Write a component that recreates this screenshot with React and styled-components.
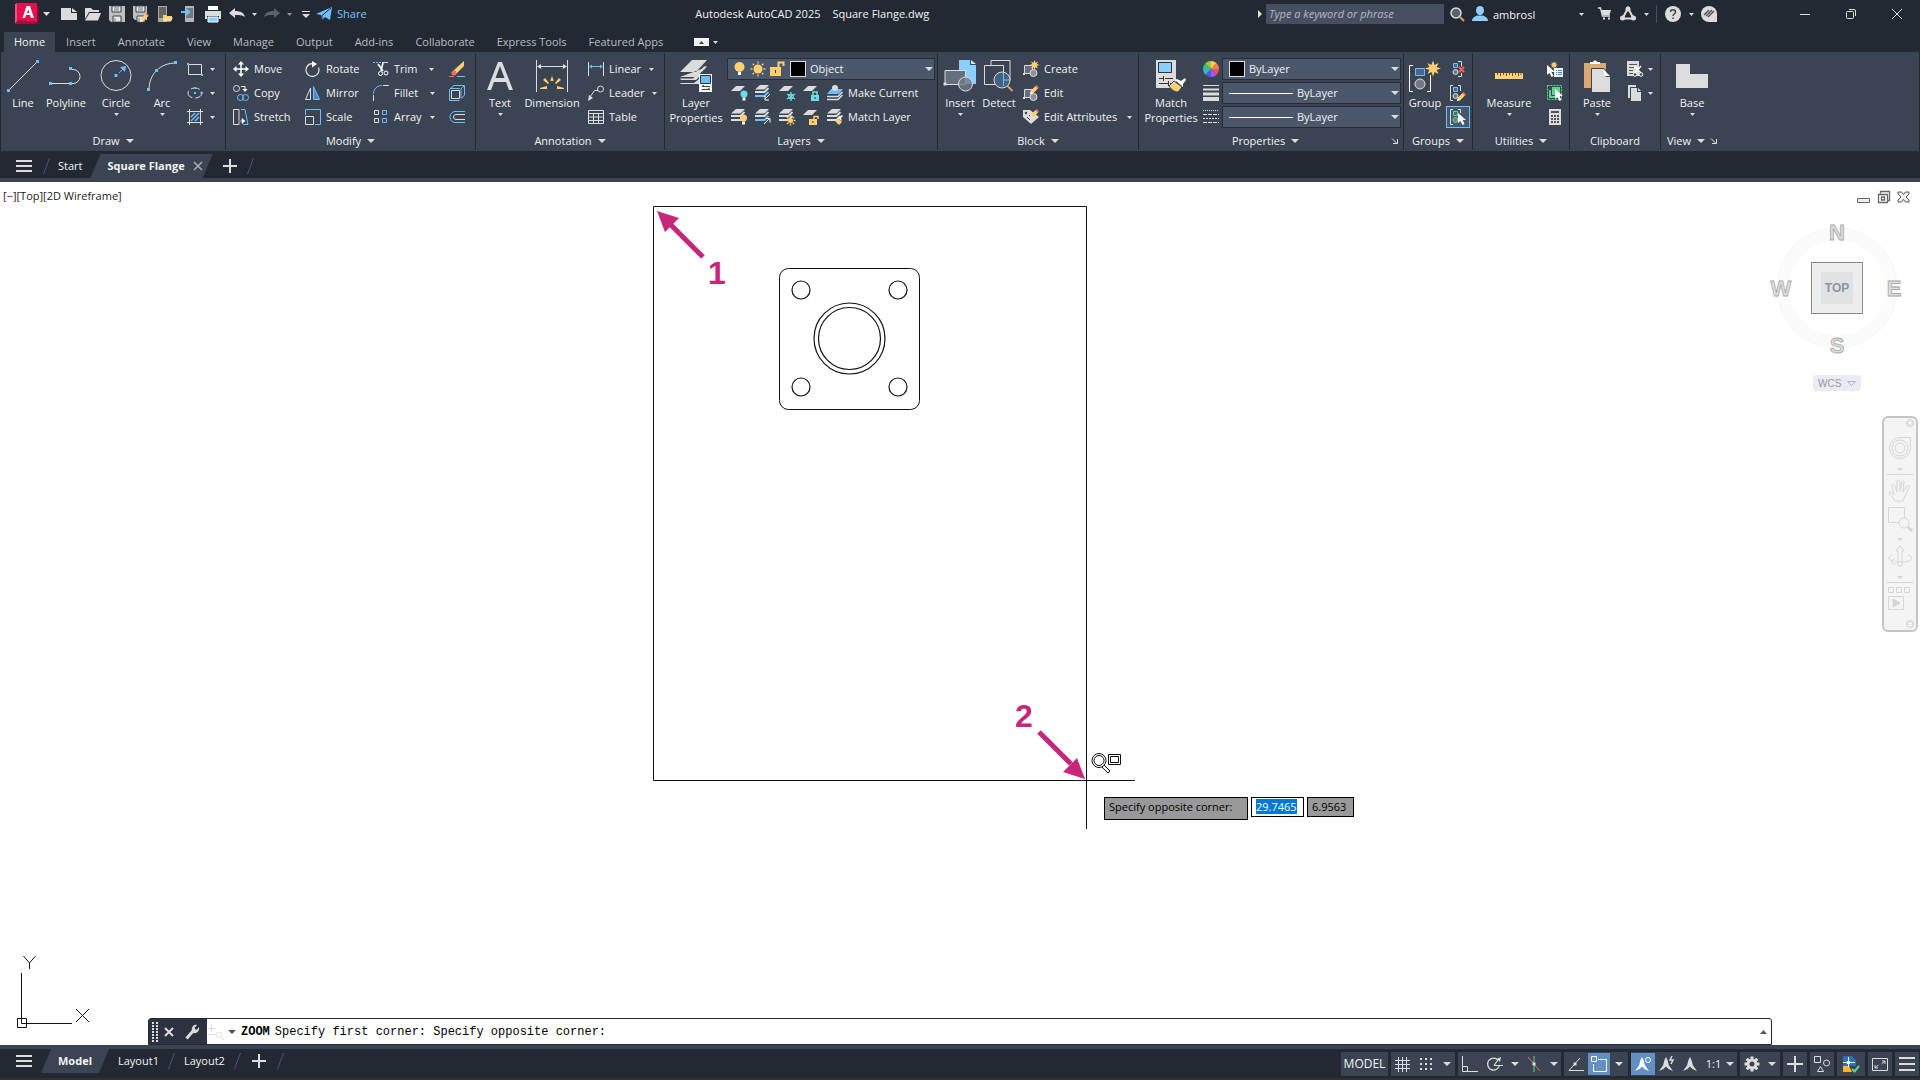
import React from "react";
import styled, { createGlobalStyle, css } from "styled-components";

const LIGHT = "#dcdcdc";
const BLUE = "#6cbeff";
const GOLD = "#ffcf70";
const DARK = "#222933";
const PANEL = "#3b4453";
const FIELD = "#4b586b";
const PINK = "#c8267b";

const GlobalStyle = createGlobalStyle`
  * {
    box-sizing: border-box;
  }

  html, body, #root {
    height: 100%;
    margin: 0;
  }

  body {
    font-family: "Open Sans", "Noto Sans", sans-serif;
    font-size: 11px;
    line-height: 15px;
    color: #f2f2f2;
    background: ${DARK};
    overflow: hidden;
  }

  button, input, select {
    font: inherit;
    color: inherit;
    margin: 0;
    padding: 0;
    border: 0;
    background: none;
    outline: none;
  }
`;

const Svg = styled.svg`
  display: block;
  flex: none;
  overflow: visible;
`;

const Ico = ({ w = 16, h = 16, children }) => (
  <Svg
    width={w}
    height={h}
    viewBox={`0 0 ${w} ${h}`}
    fill="none"
    stroke={LIGHT}
    aria-hidden="true"
  >
    {children}
  </Svg>
);

const Dot = ({ x, y, s = 3, c = BLUE }) => (
  <rect x={x - s / 2} y={y - s / 2} width={s} height={s} fill={c} stroke="none" />
);

const Caret = ({ w = 5, c = LIGHT }) => (
  <Ico w={w} h={Math.ceil(w / 2)}>
    <path d={`M0 0h${w}l${-w / 2} ${Math.ceil(w / 2)}z`} fill={c} stroke="none" />
  </Ico>
);

/* ---------- shell ---------- */

const App = styled.div`
  display: flex;
  flex-direction: column;
  height: 100vh;
  background: ${DARK};
  white-space: nowrap;
`;

const TitleBar = styled.header`
  display: flex;
  align-items: center;
  height: 28px;
  padding-left: 15px;
`;

const ToolButton = styled.button`
  display: flex;
  align-items: center;
  justify-content: center;
  flex: none;
  width: ${(p) => p.$w || 24}px;
  height: 24px;
`;

/* text sits slightly above the middle of its icon */
const Label = styled.span`
  padding-bottom: 2px;
`;

const ShareButton = styled.button`
  display: flex;
  align-items: center;
  gap: 5px;
  padding-left: 4px;
  color: #7cc5ff;
`;

const WindowTitle = styled.h1`
  display: flex;
  flex: 1;
  justify-content: center;
  gap: 12px;
  margin: 0;
  padding-bottom: 2px;
  font-size: 11px;
  font-weight: 400;
`;

const SearchField = styled.input`
  width: 178px;
  height: 20px;
  margin: 0 4px;
  padding: 0 3px 1px;
  background: #464f61;

  &::placeholder {
    color: #b4b9c2;
    font-style: italic;
    opacity: 1;
  }
`;

const UserButton = styled.button`
  display: flex;
  align-items: center;
  justify-content: space-between;
  width: 112px;
  margin: 0 10px 0 6px;
`;

const IconLabel = styled.span`
  display: flex;
  align-items: center;
  gap: 5px;
`;

const Rule = styled.span`
  width: 1px;
  height: 18px;
  margin: 0 4px;
  background: #465064;
`;

const WindowButtons = styled.div`
  display: flex;
  margin-left: 61px;
`;

/* ---------- ribbon ---------- */

const RibbonTabs = styled.nav`
  display: flex;
  align-items: flex-end;
  height: 24px;
  padding-left: 4px;
`;

const RibbonTab = styled.button`
  height: 20px;
  padding: 0 11px 1px;
  color: #b9bcc0;

  ${(p) =>
    p.$active &&
    css`
      padding: 0 10px 1px;
      color: #f2f2f2;
      background: ${PANEL};
    `}
`;

const MinimizeRibbon = styled.button`
  display: flex;
  align-items: center;
  gap: 4px;
  height: 20px;
  margin-left: 20px;
`;

const Ribbon = styled.div`
  display: flex;
  flex: none;
  height: 99px;
  margin: 0 1px;
  background: ${PANEL};
`;

const PanelBox = styled.section`
  display: flex;
  flex-direction: column;
  flex: none;
  width: ${(p) => p.$w}px;
  margin: 1px 0;
  padding-top: 4px;
  border-right: ${(p) => (p.$last ? 0 : 1)}px solid ${DARK};
`;

const PanelBody = styled.div`
  display: flex;
  flex: 1;
  padding-left: ${(p) => p.$pad || 0}px;
`;

const PanelFoot = styled.div`
  display: flex;
  align-items: center;
  height: 19px;
`;

const PanelTitle = styled.button`
  display: flex;
  flex: 1;
  align-items: center;
  justify-content: center;
  gap: 6px;
`;

const Launcher = styled.button`
  display: flex;
  width: 11px;
`;

const Panel = ({ w, pad, title, caret = true, launcher, last, children }) => (
  <PanelBox $w={w} $last={last} aria-label={title}>
    <PanelBody $pad={pad}>{children}</PanelBody>
    <PanelFoot>
      <PanelTitle>
        {title}
        {caret && <Caret w={8} />}
      </PanelTitle>
      {launcher && (
        <Launcher aria-label={`${title} settings`}>
          <Ico w={6} h={6}>
            <path d="M0 .5l5 5M5.500 1v4.500H1" />
          </Ico>
        </Launcher>
      )}
    </PanelFoot>
  </PanelBox>
);

const BigButton = styled.button`
  display: flex;
  flex-direction: column;
  align-items: center;
  flex: none;
  width: ${(p) => p.$w}px;
  height: 72px;
  padding-top: 3px;
  text-align: center;
  white-space: pre-line;
`;

const BigLabel = styled.span`
  padding: 3px 0;
`;

const Big = ({ w, icon, label, caret }) => (
  <BigButton $w={w}>
    {icon}
    <BigLabel>{label}</BigLabel>
    {caret && <Caret />}
  </BigButton>
);

const Column = styled.div`
  display: grid;
  grid-template-rows: repeat(3, 24px);
  align-items: center;
  flex: none;
  width: ${(p) => (p.$w ? `${p.$w}px` : "auto")};
  margin-left: ${(p) => p.$gap || 0}px;
`;

const SmallButton = styled.button`
  display: flex;
  align-items: center;
  gap: 5px;
`;

const DropButton = styled.button`
  display: flex;
  align-items: center;
  justify-content: space-between;
  width: ${(p) => p.$w}px;
`;

const Toggle = styled.button`
  display: flex;
  align-items: center;
  justify-content: center;
  width: 24px;
  height: 22px;
  border: 1px solid ${(p) => (p.$on ? BLUE : "transparent")};
  background: ${(p) => (p.$on ? "#46586f" : "none")};
`;

const IconRow = styled.div`
  display: flex;
  align-items: center;
  gap: 8px;
  padding-left: 4px;
`;

const Combo = styled.label`
  display: flex;
  align-items: center;
  gap: 4px;
  width: ${(p) => p.$w}px;
  height: 22px;
  padding: 0 1px 0 6px;
  border: 1px solid #262d38;
  background: ${FIELD};
`;

const Select = styled.select`
  flex: 1;
  min-width: 0;
  padding-bottom: 1px;
  appearance: none;
`;

const Swatch = styled.span`
  width: 16px;
  height: 16px;
  border: 1px solid ${LIGHT};
  background: #000;
`;

const LineSample = styled.span`
  width: 64px;
  height: 1px;
  background: #fff;
`;

/* ---------- file + layout tabs ---------- */

const FileTabs = styled.nav`
  display: flex;
  align-items: flex-end;
  flex: none;
  height: 31px;
  padding-left: 12px;
  border-bottom: 4px solid ${PANEL};
`;

const Tab = styled.button`
  display: flex;
  align-items: center;
  justify-content: center;
  gap: 9px;
  height: 24px;
  padding: 0 ${(p) => p.$end || p.$pad}px 1px ${(p) => p.$pad}px;
  font-weight: ${(p) => (p.$active ? 700 : 400)};

  ${(p) =>
    p.$active &&
    css`
      background: ${PANEL};
      clip-path: polygon(10px 0, 100% 0, calc(100% - 10px) 100%, 0 100%);
    `}
`;

const Slash = () => (
  <Ico w={7} h={24}>
    <path d="M.5 20L6.500 4" stroke="#4f5868" />
  </Ico>
);

const SlashBox = styled.span`
  display: flex;
  justify-content: center;
  width: 20px;
`;

const StatusBar = styled.footer`
  display: flex;
  justify-content: space-between;
  flex: none;
  height: 35px;
  border-top: 4px solid ${PANEL};
  border-bottom: 2px solid #303030;
`;

const LayoutTabs = styled.nav`
  display: flex;
  align-items: center;
  height: 24px;
  padding-left: 7px;
`;

const StatusTools = styled.div`
  display: flex;
  align-items: center;
  gap: 3px;
  padding-right: 1px;
`;

const StatusGroup = styled.div`
  display: flex;
  align-items: center;
  height: 24px;
  background: ${PANEL};
`;

const StatusButton = styled.button`
  display: flex;
  align-items: center;
  justify-content: center;
  gap: 5px;
  width: ${(p) => p.$w || 24}px;
  height: 22px;
  font-size: ${(p) => (p.$large ? 12 : 11)}px;
  background: ${(p) => (p.$on ? "#6390c4" : "none")};
`;

/* ---------- drawing area ---------- */

const Canvas = styled.main`
  position: relative;
  flex: 1;
  min-height: 0;
  overflow: hidden;
  background: #fff;
  color: #222;
`;

const Drawing = styled.svg`
  position: absolute;
  inset: 0;
  width: 100%;
  height: 100%;
`;

const ViewportLabel = styled.div`
  position: absolute;
  top: 6px;
  left: 3px;
`;

const ViewportTools = styled.aside`
  position: absolute;
  top: 8px;
  right: 2px;
  bottom: 0;
  display: flex;
  flex-direction: column;
  align-items: flex-end;
`;

const ViewportButtons = styled.div`
  display: flex;
  gap: 7px;
  padding-right: 8px;
`;

const PlainButton = styled.button`
  display: block;
`;

const CubeBox = styled.div`
  width: 144px;
  margin: 1px 9px 0 0;
`;

const WcsButton = styled.button`
  display: flex;
  align-items: center;
  justify-content: space-between;
  width: 48px;
  height: 16px;
  margin: 22px 57px 0 0;
  padding: 0 5px;
  border-radius: 4px;
  font: 10px "Liberation Sans", sans-serif;
  color: #999;
  background: #ebebf5;
`;

const NavBar = styled.div`
  display: flex;
  flex-direction: column;
  align-items: center;
  width: 36px;
  height: 216px;
  margin-top: 25px;
  border: 2px solid #c5c5c5;
  border-radius: 6px;
  background: #f4f4f4;
`;

const Prompt = styled.div`
  position: absolute;
  left: 1104px;
  top: 615px;
  display: flex;
  align-items: flex-start;
  gap: 3px;
  color: #000;
`;

const PromptLabel = styled.label`
  height: 23px;
  width: 144px;
  padding: 1px 4px;
  border: 1px solid #000;
  background: #999;
`;

const PromptInput = styled.input`
  width: ${(p) => p.$w}px;
  height: 20px;
  padding: 0 4px 2px;
  border: 1px solid #000;
  background: ${(p) => (p.$muted ? "#999" : "#fff")};

  &::selection {
    color: #fff;
    background: #0078d7;
  }
`;

const CommandLine = styled.div`
  position: absolute;
  left: 148px;
  right: 148px;
  bottom: 0;
  display: flex;
  height: 27px;
  border: 1px solid ${DARK};
  border-radius: 3px 3px 0 0;
  background: #fff;
`;

const CommandGrip = styled.div`
  display: flex;
  align-items: center;
  gap: 6px;
  width: 58px;
  padding-left: 3px;
  background: #2b3240;
`;

const CommandInput = styled.div`
  display: flex;
  align-items: center;
  flex: 1;
  gap: 5px;
  padding: 1px 4px 0 1px;
  font: 12px "Liberation Mono", monospace;
  color: #000;
`;

const CommandName = styled.label`
  font-weight: 700;
`;

const CommandText = styled.input`
  flex: 1;
  min-width: 0;
`;

/* ---------- icons ---------- */

const fillL = { fill: LIGHT, stroke: "none" };
const fillB = { fill: BLUE, stroke: "none" };
const fillY = { fill: GOLD, stroke: "none" };

const Logo = () => (
  <Ico w={24} h={22}>
    <path d="M2 1l2 20h20V3z" fill="#7a0f2e" stroke="none" />
    <path d="M0 1l3-1v17l-3 4z" fill="#f0567c" stroke="none" />
    <rect x="2" width="20" height="19" fill="#e51050" stroke="none" />
    <path d="M0 21l3-4 19 2-2 2z" fill="#a30d38" stroke="none" />
    <path d="M11.500 3h3.500l4 12h-3l-1-3h-4l-1 3H7.500zM13.300 6.500L12 10h2.500z" fill="#fff" stroke="none" fillRule="evenodd" />
  </Ico>
);

const Floppy = ({ s = 16 }) => (
  <>
    <path d={`M0 0h${s}v${s}H2l-2-2z`} {...fillL} fill="#bfbfbf" />
    <path d="M3 0h9v6H3zM4 10h8v6H4z" fill="#e8e8e8" stroke={PANEL} />
    <path d="M5 2h5M5 4h5M6 12v3" stroke="#777" />
  </>
);

const Pencil = ({ x = 7, y = 7 }) => (
  <g transform={`translate(${x} ${y})`} stroke="none">
    <path d="M0 9l1-3.500L5.500 1 8 3.500 3.500 8z" fill={GOLD} />
    <path d="M5.500 1L6.500 0 9 2.500 8 3.500z" fill="#ff6b6b" />
    <path d="M0 9l.8-3L3 8.200z" fill="#fff" />
  </g>
);

const Pointer = ({ x = 7, y = 4 }) => (
  <path
    transform={`translate(${x} ${y})`}
    d="M0 0v10l2.500-2L4.500 12l2-1-2-4H8z"
    fill="#fff"
    stroke="none"
  />
);

const Sheets = ({ accent = LIGHT }) => (
  <>
    <path d="M5 0h9L9.500 4.500H0z" {...fillL} />
    <path d="M0 7h9.500L13.500 3" strokeWidth="1.800" />
    <path d="M0 11h9.500L13.500 7" stroke={accent} strokeWidth="1.800" />
  </>
);

const Sheet = () => <path d="M5 1h9l-5 5H0z" {...fillL} />;

const Bulb = ({ x, y, r = 3.5, c = GOLD }) => (
  <g stroke="none">
    <circle cx={x} cy={y} r={r} fill={c} />
    <rect x={x - 1.5} y={y + r} width="3" height="3" fill="#fff" />
  </g>
);

const Sun = ({ x, y, r = 3, ray = 5 }) => (
  <g stroke={GOLD} strokeWidth="1.300">
    <circle cx={x} cy={y} r={r} fill={GOLD} stroke="none" />
    {[0, 45, 90, 135, 180, 225, 270, 315].map((a) => (
      <path key={a} d={`M${x + ray - 1} ${y}h2`} transform={`rotate(${a} ${x} ${y})`} />
    ))}
  </g>
);

const Lock = ({ x, y, open, c = GOLD }) => (
  <g transform={`translate(${x} ${y})`}>
    <rect y="4" width="8" height="6" fill={c} stroke="none" />
    <path d={open ? "M5 4V1.500h4V4" : "M2 4V1h4v3"} stroke={c} strokeWidth="1.500" />
    <path d="M4 6v2" stroke="#333" />
  </g>
);

const Burst = ({ x, y, r }) => (
  <path
    transform={`translate(${x} ${y}) scale(${r})`}
    d="M0-1l.2.55.5-.25-.25.5L1 0 .45.200l.250.5-.5-.25L0 1-.2.450l-.5.25.25-.5L-1 0l.55-.2-.25-.5.5.25z"
    {...fillY}
  />
);

const NewIcon = () => (
  <Ico><path d="M0 2h10v5h6v7H0z" {...fillL} /><path d="M11 2l5 4h-5z" {...fillL} /></Ico>
);
const OpenIcon = () => (
  <Ico>
    <path d="M0 14V2h6l2 2h6v2H4L0 13z" {...fillL} />
    <path d="M4.500 7H16l-3 7.500H0z" {...fillL} />
  </Ico>
);
const SaveIcon = () => <Ico><Floppy /></Ico>;
const SaveAsIcon = () => <Ico><Floppy s={14} /><Pencil /></Ico>;
const WebOpenIcon = () => (
  <Ico>
    <path d="M1 0h9v16H1z" {...fillL} fill="#a8a8a8" /><path d="M2 1h7v11H2z" fill="#666" stroke="none" />
    <path d="M6 15V9h3l1 1h5v1l-2 4z" {...fillY} /><path d="M8 11.500h8l-2 4H6z" fill="#ffe0a0" stroke="none" />
  </Ico>
);
const WebSaveIcon = () => (
  <Ico>
    <path d="M4 0h9v16H4z" {...fillL} fill="#b5b5b5" /><path d="M5 2h7v10H5z" fill="#777" stroke="none" />
    <path d="M0 5h5V2l5 4-5 4V7H0z" {...fillB} />
  </Ico>
);
const PrintIcon = () => (
  <Ico>
    <path d="M3 0h10v4H3z" fill="#fff" stroke="none" /><path d="M0 5h16v8h-2v-3H2v3H0z" {...fillL} />
    <path d="M3 11h10v5H3z" fill="#8cceff" stroke="#fff" />
  </Ico>
);
const ArrowBack = ({ flip, c = LIGHT }) => (
  <Ico>
    <path d="M0 7l6-5v3c6 0 9 2 10 6-3-2-6-2-10-2v3z" fill={c} stroke="none" transform={flip ? "matrix(-1 0 0 1 16 0)" : undefined} />
  </Ico>
);
const ShareIcon = () => (
  <Ico w={16} h={14}>
    <path d="M0 7L16 0l-2 13-5-3-3 3-1-5zM5 8l8-6-6 8" {...fillB} /><path d="M15 1L6 8.500v5" stroke={DARK} />
  </Ico>
);

const LineIcon = () => (
  <Ico w={32} h={32}><path d="M2 30L30 2" /><Dot x={1.5} y={30.5} /><Dot x={30.5} y={1.5} /></Ico>
);
const PolylineIcon = () => (
  <Ico w={32} h={32}>
    <path d="M0 23.500h23a7 7 0 0 0 0-14h-3" /><Dot x={0.5} y={23.5} /><Dot x={20.5} y={23.5} /><Dot x={20.5} y={8.5} />
  </Ico>
);
const CircleIcon = () => (
  <Ico w={32} h={32}>
    <circle cx="16" cy="15.500" r="15" /><Dot x={16} y={15.5} /><path d="M19 13l5-5" stroke={BLUE} /><path d="M26 6l-1 6-5-5z" {...fillB} />
  </Ico>
);
const ArcIcon = () => (
  <Ico w={32} h={32}><path d="M3 30C3 14 14 3 30 3" /><Dot x={2.5} y={29.5} /><Dot x={10.5} y={10.5} /><Dot x={29.5} y={2.5} /></Ico>
);
const RectIcon = () => <Ico><path d="M1.500 3.500h13v10h-13z" /><Dot x={1} y={3} s={2} /><Dot x={15} y={14} s={2} /></Ico>;
const EllipseIcon = () => (
  <Ico><ellipse cx="8" cy="8" rx="7" ry="5" strokeDasharray="9 3" /><Dot x={8} y={3} s={2} /><Dot x={8} y={8} s={2} /><Dot x={14.5} y={8} s={2} /></Ico>
);
const HatchIcon = () => (
  <Ico>
    <path d="M2.500 0v16M13.500 0v16M0 2.500h16M0 13.500h16" /><path d="M4 8l4-4M4 12l8-8M8 12l4-4" stroke={BLUE} strokeWidth="1.500" />
  </Ico>
);
const MoveIcon = () => (
  <Ico>
    <path d="M8 2v12M2 8h12" stroke="#fff" strokeWidth="1.500" />
    <path d="M8 0l3 3.500H5zM8 16l3-3.500H5zM0 8l3.500-3v6zM16 8l-3.500-3v6z" fill="#fff" stroke="none" />
  </Ico>
);
const CopyIcon = () => (
  <Ico>
    <circle cx="3.500" cy="3.500" r="3" /><path d="M8 1.500h4v4" stroke="#fff" /><path d="M9.500 4h5L12 7z" fill="#fff" stroke="none" />
    <circle cx="7.500" cy="12.500" r="3" stroke={BLUE} /><circle cx="12.500" cy="12.500" r="3" stroke={BLUE} />
  </Ico>
);
const StretchIcon = () => (
  <Ico><path d="M6 11V.5H.5v15H6V13" /><path d="M5 12h5M9 9.500v5l3-2.500z" fill="#fff" stroke="#fff" strokeWidth=".6" /><path d="M8 .5h4l3 15h-5" stroke={BLUE} /></Ico>
);
const RotateIcon = () => (
  <Ico><path d="M7 2.500a6.500 6.500 0 1 0 6.500 4" strokeWidth="1.300" /><path d="M7 0l5 3-5 3.500z" fill="#fff" stroke="none" /></Ico>
);
const MirrorIcon = () => (
  <Ico><path d="M5.500 3v11.500h-5z" /><path d="M8.500 1.500v13h6z" stroke={BLUE} fill="#4f89b8" /></Ico>
);
const ScaleIcon = () => (
  <Ico><path d="M.5 6V.5h15v15H10" stroke={BLUE} /><path d="M.5 7.500h8v8h-8z" /></Ico>
);
const TrimIcon = () => (
  <Ico>
    <path d="M0 1.500h8" stroke={BLUE} strokeDasharray="2 1" /><path d="M9 1.500h6" />
    <path d="M5 3l5 7M10 2L8 10" stroke="#fff" strokeWidth="1.600" /><circle cx="7.500" cy="12.500" r="2" stroke="#fff" /><circle cx="13" cy="12" r="2" stroke="#fff" />
  </Ico>
);
const FilletIcon = () => <Ico><path d="M.5 16v-6M10 .5h6" /><path d="M.5 9C.5 4 4 .5 9 .5" stroke={BLUE} /></Ico>;
const ArrayIcon = () => (
  <Ico>
    <path d="M1.500 1.500h4v4h-4zM1.500 9.500h4v4h-4z" /><path d="M9.500 1.500h4v4h-4zM9.500 9.500h4v4h-4z" stroke={BLUE} />
  </Ico>
);
const EraseIcon = () => (
  <Ico><path d="M15 0v5l-8 8-3-3z" {...fillY} /><circle cx="5" cy="12" r="2.500" fill="#ff6b6b" stroke="none" /><path d="M0 15.500h5" stroke="#ff6b6b" /><path d="M8 15.500h8" stroke={BLUE} /></Ico>
);
const ExplodeIcon = () => (
  <Ico><path d="M2.500 5.500h8v8h-8z" /><path d="M.5 4v11.500h10M2 3l3-2.500h10.500V10l-3 3.500M12 4l3-3M12 4v9M1 3.500h10" stroke={BLUE} /></Ico>
);
const OffsetIcon = () => (
  <Ico><path d="M16 2.500H6a5 5.500 0 0 0 0 11h10" stroke={BLUE} /><path d="M16 5.500H7a2.500 2.500 0 0 0 0 5h9" /></Ico>
);
const TextIcon = () => (
  <Ico w={32} h={32}>
    <path d="M3 30h4l3-8h12l3 8h4L18 2h-4zM11.500 18L16 6l4.500 12z" {...fillL} fillRule="evenodd" />
  </Ico>
);
const DimensionIcon = () => (
  <Ico w={32} h={32}>
    <path d="M.5 0v32M31.500 0v32M2 6.500h28" /><path d="M1 6.500l4-2.500v5zM31 6.500L27 4v5z" {...fillL} />
    <path d="M14.500 20l1.500-4 1.500 4v1h-3zM9 18l4 5-1 1-5-4zM23 18l-4 5 1 1 5-4zM4 28l7-2v3H4zM28 28l-7-2v3h7z" {...fillY} />
  </Ico>
);
const LinearIcon = () => (
  <Ico><path d="M.5 1v14M15.500 1v14" /><path d="M2 5.500h12" stroke={BLUE} /><path d="M1 5.500l3-2v4zM15 5.500l-3-2v4z" {...fillB} /></Ico>
);
const LeaderIcon = () => (
  <Ico><circle cx="12.500" cy="4" r="3" /><path d="M10 5.500H6.500L2 12" /><path d="M0 16l1-6 4 3z" {...fillL} /></Ico>
);
const TableIcon = () => (
  <Ico><path d="M.5 1.500h15v13H.5zM.5 4.500h15M.5 8h15M.5 11.500h15M5.500 5v10M10.500 5v10" /></Ico>
);
const LayerPropsIcon = () => (
  <Ico w={32} h={32}>
    <path d="M12 0h15L16 12H0zM0 17h16L27 7M0 23h16" {...fillL} />
    <path d="M0 18.500h13L24 6.500l3-.5-8 8v3l-3 3H1zM1 23h13l5-4v5H0z" {...fillL} />
    <path d="M19 14h13v18H19z" fill="#f4f4f4" stroke="none" />
    <path d="M20.500 15.500h10v8h-10z" fill="#6cbeff" stroke="#2a3342" />
    <path d="M22 26.500h8M22 29.500h8M24 25l-2 1.500M28 28l2 1.500" stroke="#444" />
  </Ico>
);
const SnowIcon = () => (
  <g stroke="#6cdce6"><path d="M12 7v9M8 9l8 5M16 9l-8 5" strokeWidth="1.300" /><circle cx="12" cy="11.500" r="2.500" /></g>
);
const LayerOff = () => <Ico><Sheet /><Bulb x={13} y={9} c="#6cdce6" /></Ico>;
const LayerIso = () => <Ico><Sheets accent={BLUE} /><path d="M15 9l-5 5M10 11v4h4" stroke="#fff" /></Ico>;
const LayerFreeze = () => <Ico><Sheet /><SnowIcon /></Ico>;
const LayerLock = () => <Ico><Sheet /><Lock x={8} y={6} c="#6cdce6" /></Ico>;
const MakeCurrentIcon = () => (
  <Ico>
    <path d="M4 4h12l-4 5H0z" {...fillB} /><circle cx="8" cy="3" r="3" {...fillL} />
    <path d="M0 11.500h11L15.500 7M0 14.500h11l4.500-4.500" stroke={LIGHT} strokeWidth="1.500" />
  </Ico>
);
const LayersOn = () => <Ico><Sheets /><Bulb x={12.5} y={9} /></Ico>;
const LayerUniso = () => <Ico><Sheets accent={BLUE} /><path d="M9 15l5.500-5.500M11 9.500h4v4" stroke="#fff" /></Ico>;
const LayerThaw = () => <Ico><Sheets /><Sun x={11.500} y={11.500} r={2.5} ray={4} /></Ico>;
const LayerUnlock = () => <Ico><Sheet /><Lock x={6} y={6} open /></Ico>;
const MatchLayerIcon = () => (
  <Ico><Sheets /><path d="M8 12l3-3 4 4-3 3z" {...fillY} /><path d="M11 9l4-3 1 1-2 2 1 3z" fill="#fff" stroke="none" /></Ico>
);

const InsertIcon = () => (
  <Ico w={32} h={32}>
    <path d="M15 0h11v5h6v19H15z" fill="#8cceff" stroke="none" /><path d="M27 0l5 4h-5z" fill="#d0eaff" stroke="none" />
    <path d="M1 10.500h20.500v14H1z" fill="#666f7f" /><Dot x={1} y={24} c={LIGHT} /><circle cx="21.500" cy="24" r="7" fill="#727a88" fillOpacity=".8" />
  </Ico>
);
const DetectIcon = () => (
  <Ico w={30} h={32}>
    <path d="M7 5V.5h19v20M.5 5.500h19v19H.5z" /><circle cx="18" cy="20" r="8" fill="#44627f" /><path d="M19.500 13v13M19.500 20h6" stroke={BLUE} />
    <path d="M23.500 26l5 5" stroke="#dba266" strokeWidth="2" />
  </Ico>
);
const BlockBase = () => (
  <><path d="M1.500 4.500h8v8h-8z" fill="#666f7f" /><Dot x={1} y={13} s={2} c={LIGHT} /><circle cx="10.500" cy="12" r="3.500" fill="#8b919c" /></>
);
const CreateIcon = () => <Ico><BlockBase /><Burst x={11.500} y={4} r={5} /></Ico>;
const EditBlockIcon = () => <Ico><BlockBase /><Pencil x={7} y={0} /></Ico>;
const EditAttrIcon = () => (
  <Ico><path d="M0 1h7l9 7-8 7-8-7z" {...fillL} /><circle cx="3" cy="4" r="1.200" fill={PANEL} stroke="none" /><path d="M4 8l3 3M6 6l3 3" stroke={PANEL} /><Pencil x={7} y={0} /></Ico>
);

const MatchPropsIcon = () => (
  <Ico w={30} h={32}>
    <path d="M0 0h20v28H0z" {...fillL} /><path d="M2.500 2.500h13v10h-13z" fill="#8cceff" stroke="#2a3342" />
    <path d="M3 18.500h4M9 18.500h8M3 23.500h9M14 23.500h3M7.500 16v5M12.500 21v5" stroke="#333" />
    <path d="M13 26l5-5 8 6-4 5c-4 0-7-3-9-6z" fill={GOLD} stroke={PANEL} /><path d="M19 20l2-1 4 2 4-3 1 2-3 4v3z" fill="#fff" stroke="none" />
  </Ico>
);
const WHEEL = ["#ffc94a", "#ff7a59", "#ef5350", "#9b59ff", "#5a55e0", "#35b6d6", "#35c46a", "#9ccc3c"];
const ColorWheelIcon = () => (
  <Ico>
    {WHEEL.map((c, i) => (
      <path key={c} d="M8 8L8 0A8 8 0 0 1 13.660 2.340z" fill={c} stroke="none" transform={`rotate(${i * 45} 8 8)`} />
    ))}
  </Ico>
);
const WeightIcon = () => <Ico><path d="M0 .5h16" /><path d="M0 4.500h16" strokeWidth="2" /><path d="M0 9h16" strokeWidth="3" /><path d="M0 14h16" strokeWidth="4" /></Ico>;
const LinetypeIcon = () => (
  <Ico><path d="M0 1.500h16" strokeDasharray="1 1" /><path d="M0 5.500h16M0 13.500h16" strokeDasharray="4 1" /><path d="M0 9.500h16" strokeDasharray="2 1" /></Ico>
);

const GroupIcon = () => (
  <Ico w={32} h={32}>
    <path d="M4 5.500H.5v26H4M18 31.500h3.500V15" stroke="#fff" /><path d="M6.500 8.500h9v7h-9z" fill="#4a6785" stroke={BLUE} />
    <circle cx="11" cy="24" r="5" fill="#727a88" /><Burst x={24} y={8.500} r={8} />
  </Ico>
);
const Bracketed = ({ c = BLUE, g = LIGHT, children }) => (
  <Ico>
    <path d="M3.500 2.500h4v4h-4z" stroke={c} fill="#4a6785" /><circle cx="5.500" cy="11" r="2.500" stroke={g} fill="#727a88" />
    {children}
  </Ico>
);
const UngroupIcon = () => (
  <Bracketed><path d="M8 .5h3.500v5M11.500 12v3.500H8" /><path d="M9 6l5 5M14 6l-5 5" stroke="#ff5b5b" strokeWidth="2" /></Bracketed>
);
const GroupEditIcon = () => (
  <Bracketed><path d="M3 .5H.5v15H3M8 .5h2.500V6" /><Pencil x={7} y={7} /></Bracketed>
);
const GroupSelectIcon = () => (
  <Bracketed c="#5cd68a" g="#5cd68a"><path d="M3 .5H.5v15H3M8 .5h2.500V4" /><Pointer x={8} y={4} /></Bracketed>
);

const MeasureIcon = () => (
  <Ico w={32} h={32}><path d="M2 13h28v6H2z" {...fillY} /><path d="M4.500 13v2M7.500 13v3M10.500 13v2M13.500 13v3M16.500 13v2M19.500 13v3M22.500 13v2M25.500 13v3M28 13v2" stroke="#6b5a35" /></Ico>
);
const QuickSelectIcon = () => (
  <Ico><Pointer x={0} y={4} /><Burst x={7} y={4} r={4} /><path d="M7 7h9v9H7z" fill="#fff" stroke="none" /><path d="M9 9.500h1M11 9.500h4M9 11.500h1M11 11.500h4M9 13.500h1M11 13.500h4" stroke="#1786e0" /></Ico>
);
const SelectAllIcon = () => (
  <Ico><path d="M.5.5h14v14H.5z" stroke="#5cd68a" strokeDasharray="2 1" /><path d="M2 5h3V2h8v11H2z" fill="#5cd68a" stroke="none" /><path d="M4.500 5v5.500H9" stroke={PANEL} /><Pointer x={8} y={4} /></Ico>
);
const CalcIcon = () => (
  <Ico w={12} h={16}>
    <path d="M0 0h12v16H0z" {...fillL} /><path d="M2 3h8" stroke="#555" strokeWidth="2" />
    <path d="M2 7h8M2 10h8M2 13h8" stroke="#555" strokeWidth="2" strokeDasharray="2 1" />
  </Ico>
);
const PasteIcon = () => (
  <Ico w={26} h={32}>
    <path d="M0 3h22v25H0z" fill="#dba971" stroke="none" /><path d="M6 4V2h3c0-2 4-2 4 0h3v2z" fill="#fff" stroke="none" />
    <path d="M8 9h12v8h6v15H8z" {...fillL} /><path d="M7.500 28V8.500H20l6 7" stroke={PANEL} /><path d="M20 10l6 6h-6z" fill="#fff" stroke="none" />
  </Ico>
);
const CutIcon = () => (
  <Ico>
    <path d="M0 0h12v15H0z" {...fillL} /><path d="M2 3.500h8M2 6.500h5M2 9.500h4M2 12.500h4" stroke="#555" />
    <path d="M7 5l7 7M14 5l-6 7" stroke="#fff" strokeWidth="1.500" /><circle cx="8" cy="13.500" r="1.800" fill={PANEL} stroke="#fff" /><circle cx="14" cy="13.500" r="1.800" fill={PANEL} stroke="#fff" />
  </Ico>
);
const CopyClipIcon = () => (
  <Ico><path d="M1 0h8v2H3v11H1z" {...fillL} /><path d="M4 3h6v4h4v9H4z" {...fillL} /><path d="M11 3l3 3h-3z" {...fillL} /></Ico>
);
const BaseIcon = () => <Ico w={32} h={32}><path d="M0 4h14v10h18v14H0z" {...fillL} /></Ico>;

const Burger = () => <Ico w={16} h={12}><path d="M0 1h16M0 6h16M0 11h16" strokeWidth="2" /></Ico>;
const Plus = () => <Ico w={14} h={14}><path d="M7 0v14M0 7h14" strokeWidth="2" /></Ico>;

const GearIcon = () => (
  <Ico>
    <circle cx="8" cy="8" r="4" strokeWidth="3" />
    {[0, 45, 90, 135].map((a) => (
      <path key={a} d="M8 .5v3M8 12.500v3" strokeWidth="3" transform={`rotate(${a} 8 8)`} />
    ))}
  </Ico>
);
const Annot = ({ c = LIGHT, children }) => (
  <Ico>
    <path d="M7 1l1.500 3L10 9.500l4 5.500-4.500-2L7 10.500 4.500 13 0 15l4-5.500L5.500 4z" fill={c} stroke="none" />
    {children}
  </Ico>
);

/* ---------- ribbon data ---------- */

const TABS = [
  "Home", "Insert", "Annotate", "View", "Manage", "Output",
  "Add-ins", "Collaborate", "Express Tools", "Featured Apps",
];

const MODIFY = [
  { w: 72, items: [["Move", MoveIcon], ["Copy", CopyIcon], ["Stretch", StretchIcon]] },
  { w: 68, items: [["Rotate", RotateIcon], ["Mirror", MirrorIcon], ["Scale", ScaleIcon]] },
];

const LAYER_ROWS = [
  {
    tools: [["Off", LayerOff], ["Isolate", LayerIso], ["Freeze", LayerFreeze], ["Lock", LayerLock]],
    main: ["Make Current", MakeCurrentIcon],
  },
  {
    tools: [["Turn all on", LayersOn], ["Unisolate", LayerUniso], ["Thaw all", LayerThaw], ["Unlock", LayerUnlock]],
    main: ["Match Layer", MatchLayerIcon],
  },
];

const Small = ({ icon: Glyph, label }) => (
  <SmallButton><Glyph /><Label>{label}</Label></SmallButton>
);

const SmallDrop = ({ w, icon: Glyph, label }) => (
  <DropButton $w={w}>
    <IconLabel><Glyph />{label && <Label>{label}</Label>}</IconLabel>
    <Caret />
  </DropButton>
);

const IconButton = ({ label, icon: Glyph }) => (
  <PlainButton aria-label={label}><Glyph /></PlainButton>
);

const RibbonPanels = () => (
  <Ribbon>
    <Panel w={225} pad={1} title="Draw">
      <Big w={42} icon={<LineIcon />} label="Line" />
      <Big w={44} icon={<PolylineIcon />} label="Polyline" />
      <Big w={56} icon={<CircleIcon />} label="Circle" caret />
      <Big w={36} icon={<ArcIcon />} label="Arc" caret />
      <Column $gap={7}>
        <SmallDrop w={28} icon={RectIcon} />
        <SmallDrop w={28} icon={EllipseIcon} />
        <SmallDrop w={28} icon={HatchIcon} />
      </Column>
    </Panel>

    <Panel w={250} pad={7} title="Modify">
      {MODIFY.map(({ w, items }) => (
        <Column $w={w} key={w}>
          {items.map(([label, icon]) => <Small key={label} label={label} icon={icon} />)}
        </Column>
      ))}
      <Column $w={76}>
        <SmallDrop w={61} icon={TrimIcon} label="Trim" />
        <SmallDrop w={62} icon={FilletIcon} label="Fillet" />
        <SmallDrop w={62} icon={ArrayIcon} label="Array" />
      </Column>
      <Column>
        <IconButton label="Erase" icon={EraseIcon} />
        <IconButton label="Explode" icon={ExplodeIcon} />
        <IconButton label="Offset" icon={OffsetIcon} />
      </Column>
    </Panel>

    <Panel w={189} pad={4} title="Annotation">
      <Big w={40} icon={<TextIcon />} label="Text" caret />
      <Big w={64} icon={<DimensionIcon />} label="Dimension" />
      <Column $w={76} $gap={4}>
        <SmallDrop w={66} icon={LinearIcon} label="Linear" />
        <SmallDrop w={69} icon={LeaderIcon} label="Leader" />
        <Small icon={TableIcon} label="Table" />
      </Column>
    </Panel>

    <Panel w={273} title="Layers">
      <Big w={62} icon={<LayerPropsIcon />} label={"Layer\nProperties"} />
      <Column $w={208}>
        <Combo $w={208}>
          <Ico w={12} h={16}><Bulb x={5.5} y={6} r={5} /></Ico>
          <Ico><Sun x={8} y={8} r={4.5} ray={6.500} /></Ico>
          <Ico><path d="M0 6h11v9H0z" {...fillY} /><path d="M8.500 6V1.500h5V5" stroke={GOLD} strokeWidth="2" /><path d="M5.500 9v3" stroke="#333" /></Ico>
          <Swatch />
          <Select aria-label="Layer"><option>Object</option></Select>
          <Caret w={8} />
        </Combo>
        {LAYER_ROWS.map(({ tools, main }) => (
          <IconRow key={main[0]}>
            {tools.map(([label, icon]) => <IconButton key={label} label={label} icon={icon} />)}
            <Small label={main[0]} icon={main[1]} />
          </IconRow>
        ))}
      </Column>
    </Panel>

    <Panel w={201} pad={3} title="Block">
      <Big w={38} icon={<InsertIcon />} label="Insert" caret />
      <Big w={40} icon={<DetectIcon />} label="Detect" />
      <Column $gap={4}>
        <Small icon={CreateIcon} label="Create" />
        <Small icon={EditBlockIcon} label="Edit" />
        <SmallDrop w={109} icon={EditAttrIcon} label="Edit Attributes" />
      </Column>
    </Panel>

    <Panel w={265} title="Properties" launcher>
      <Big w={64} icon={<MatchPropsIcon />} label={"Match\nProperties"} />
      <Column $w={19}>
        <ColorWheelIcon />
        <WeightIcon />
        <LinetypeIcon />
      </Column>
      <Column>
        <Combo $w={179}>
          <Swatch />
          <Select aria-label="Object color"><option>ByLayer</option></Select>
          <Caret w={8} />
        </Combo>
        <Combo $w={179}>
          <LineSample />
          <Select aria-label="Lineweight"><option>ByLayer</option></Select>
          <Caret w={8} />
        </Combo>
        <Combo $w={179}>
          <LineSample />
          <Select aria-label="Linetype"><option>ByLayer</option></Select>
          <Caret w={8} />
        </Combo>
      </Column>
    </Panel>

    <Panel w={69} title="Groups">
      <Big w={42} icon={<GroupIcon />} label="Group" />
      <Column>
        <Toggle aria-label="Ungroup"><UngroupIcon /></Toggle>
        <Toggle aria-label="Group edit"><GroupEditIcon /></Toggle>
        <Toggle $on aria-label="Group selection"><GroupSelectIcon /></Toggle>
      </Column>
    </Panel>

    <Panel w={97} title="Utilities">
      <Big w={72} icon={<MeasureIcon />} label="Measure" caret />
      <Column $gap={2}>
        <IconButton label="Quick select" icon={QuickSelectIcon} />
        <IconButton label="Select all" icon={SelectAllIcon} />
        <ToolButton $w={16} aria-label="Calculator"><CalcIcon /></ToolButton>
      </Column>
    </Panel>

    <Panel w={91} title="Clipboard" caret={false}>
      <Big w={54} icon={<PasteIcon />} label="Paste" caret />
      <Column $gap={3}>
        <SmallDrop w={26} icon={CutIcon} />
        <SmallDrop w={26} icon={CopyClipIcon} />
      </Column>
    </Panel>

    <Panel w={61} title="View" launcher last>
      <Big w={62} icon={<BaseIcon />} label="Base" caret />
    </Panel>
  </Ribbon>
);

const Header = () => (
  <TitleBar>
    <ToolButton aria-label="Application menu"><Logo /></ToolButton>
    <ToolButton $w={14} aria-label="More"><Caret w={7} /></ToolButton>
    <ToolButton $w={32} aria-label="New"><NewIcon /></ToolButton>
    <ToolButton $w={16} aria-label="Open"><OpenIcon /></ToolButton>
    <ToolButton $w={32} aria-label="Save"><SaveIcon /></ToolButton>
    <ToolButton $w={16} aria-label="Save as"><SaveAsIcon /></ToolButton>
    <ToolButton $w={32} aria-label="Open from web"><WebOpenIcon /></ToolButton>
    <ToolButton $w={16} aria-label="Save to web"><WebSaveIcon /></ToolButton>
    <ToolButton $w={32} aria-label="Plot"><PrintIcon /></ToolButton>
    <ToolButton $w={16} aria-label="Undo"><ArrowBack /></ToolButton>
    <ToolButton $w={19} aria-label="Undo list"><Caret /></ToolButton>
    <ToolButton $w={16} aria-label="Redo"><ArrowBack flip c="#5b616b" /></ToolButton>
    <ToolButton $w={19} aria-label="Redo list"><Caret c="#8f949b" /></ToolButton>
    <ToolButton $w={13} aria-label="Customize">
      <Ico w={8} h={7}><path d="M0 .5h8" /><path d="M0 3h8L4 7z" {...fillL} /></Ico>
    </ToolButton>
    <ShareButton><ShareIcon /><Label>Share</Label></ShareButton>

    <WindowTitle>
      <span>Autodesk AutoCAD 2025</span>
      <span>Square Flange.dwg</span>
    </WindowTitle>

    <Ico w={4} h={8}><path d="M0 0l4 4-4 4z" {...fillL} /></Ico>
    <SearchField type="search" aria-label="Search" placeholder="Type a keyword or phrase" />
    <ToolButton $w={18} aria-label="Find">
      <Ico><circle cx="7" cy="7" r="5" fill="#5a6270" strokeWidth="1.500" /><path d="M11 11l4 4" stroke="#dba266" strokeWidth="2" /></Ico>
    </ToolButton>
    <UserButton>
      <IconLabel>
        <Ico>
          <ellipse cx="8" cy="4.500" rx="4" ry="4.500" fill="#8cceff" stroke="none" />
          <path d="M0 15c0-3 3-5 5.500-5.500h5C13 10 16 12 16 15z" fill="#8cceff" stroke="none" />
        </Ico>
        ambrosl
      </IconLabel>
      <Caret />
    </UserButton>
    <ToolButton $w={22} aria-label="App store">
      <Ico w={14} h={14}><path d="M0 1h2.500l2 8H12" strokeWidth="1.300" /><path d="M3.500 3H13l-1.500 5H4.500z" {...fillL} /><path d="M5 11.500h2M10 11.500h2" strokeWidth="2" /></Ico>
    </ToolButton>
    <ToolButton $w={24} aria-label="Autodesk App">
      <Ico><path d="M8 2L2.500 12.500h11z" strokeWidth="2" /><circle cx="8" cy="3" r="2.500" {...fillL} /><circle cx="2.500" cy="12" r="2.500" {...fillL} /><circle cx="13.500" cy="12" r="2.500" {...fillL} /></Ico>
    </ToolButton>
    <ToolButton $w={12} aria-label="App list"><Caret /></ToolButton>
    <Rule />
    <ToolButton $w={24} aria-label="Help">
      <Ico><circle cx="8" cy="8" r="8" {...fillL} /><path d="M5.500 6C5.500 3 10.500 3 10.500 6c0 2-2.500 2-2.500 4M8 11.500v1.500" stroke="#444" strokeWidth="1.500" /></Ico>
    </ToolButton>
    <ToolButton $w={12} aria-label="Help list"><Caret /></ToolButton>
    <ToolButton $w={24} aria-label="Feedback">
      <Ico><path d="M8 0a8 8 0 0 1 8 8v8H8A8 8 0 0 1 8 0z" {...fillL} /><path d="M3 9l5-5M5 10l6-6M7 11l6-6" stroke="#555" strokeWidth="1.500" /></Ico>
    </ToolButton>
    <WindowButtons>
      <ToolButton $w={46} aria-label="Minimize"><Ico w={10} h={10}><path d="M0 5.500h10" /></Ico></ToolButton>
      <ToolButton $w={46} aria-label="Restore"><Ico w={10} h={10}><rect x=".5" y="2.500" width="7" height="7" rx="1" /><path d="M3 .5h5q1.500 0 1.500 1.500v5" /></Ico></ToolButton>
      <ToolButton $w={46} aria-label="Close"><Ico w={10} h={10}><path d="M0 0l10 10M10 0L0 10" /></Ico></ToolButton>
    </WindowButtons>
  </TitleBar>
);

/* ---------- canvas content ---------- */

const HOLES = [[801, 108], [898, 108], [801, 205], [898, 205]];

const Plan = () => (
  <Drawing fill="none" stroke="#111" aria-label="Square flange drawing">
    <path d="M653.500 24.500h433v574h-433z" />
    <rect x="779.500" y="86.500" width="140" height="141" rx="9" />
    {HOLES.map(([x, y]) => <circle key={`${x}-${y}`} cx={x} cy={y} r="9" strokeWidth="1.200" />)}
    <circle cx="849.500" cy="156.500" r="35.500" strokeWidth="1.200" />
    <circle cx="849.500" cy="156.500" r="31" strokeWidth="1.200" />

    <path d="M1086.500 550v97M1038 598.500h97" />
    <g>
      <circle cx="1099" cy="578.500" r="7" />
      <circle cx="1099" cy="578.500" r="5" />
      <path d="M1104 583l6 6-2 2-6-6" />
      <path d="M1108.500 572.500h12v10h-12zM1110.500 574.500h8v6h-8z" />
    </g>

    <g stroke={PINK} fill={PINK}>
      <path d="M671 43l32 32M1039 550l32 32" strokeWidth="5" />
      <path d="M657 29l22 7-14 14zM1085 597l-8-21-14 14z" stroke="none" />
      <g stroke="none" fontFamily="Liberation Sans, sans-serif" fontWeight="700" fontSize="32">
        <text x="708" y="102">1</text>
        <text x="1015" y="545">2</text>
      </g>
    </g>

    {/* UCS icon */}
    <path d="M21.500 791v50.500H72M17.500 836.500h9v9h-9z" />
    <path d="M23.500 774l6 7 6-7M29.500 781v6M76 827l13 13M89 827l-13 13" />
  </Drawing>
);

const ViewCube = () => (
  <CubeBox>
    <Ico w={144} h={148}>
      <circle cx="72" cy="83" r="54" stroke="#fbfbfb" strokeWidth="13" />
      <circle cx="72" cy="83" r="60" stroke="#f4f4f4" strokeWidth=".6" />
      <rect x="46.500" y="57.500" width="51" height="51" fill="#ededed" stroke="#8a8a8a" />
      <rect x="56" y="67" width="32" height="32" fill="#dfe3e6" stroke="none" />
      <g fontFamily="Liberation Sans, sans-serif" fontWeight="700" textAnchor="middle">
        <text x="72" y="87" fontSize="12" fill="#8f9498" stroke="none">TOP</text>
        <g fontSize="22" fill="#dedede" stroke="#a8a8a8" strokeWidth=".8">
          <text x="72" y="35">N</text>
          <text x="72" y="148">S</text>
          <text x="16" y="91">W</text>
          <text x="129" y="91">E</text>
        </g>
      </g>
    </Ico>
  </CubeBox>
);

const NavTools = () => (
  <NavBar>
    <Ico w={32} h={212}>
      <g stroke="#d3d6d6">
        <circle cx="26" cy="5" r="3.500" fill="#e2e2e2" /><path d="M24.500 3.500l3 3M27.500 3.500l-3 3" stroke="#fff" />
        <path d="M26.500 30V19.500H16a10.500 10.500 0 1 0 10.500 10.500z" /><circle cx="16" cy="30" r="8" /><circle cx="16" cy="30" r="5" />
        <path d="M13 50h6l-3 3z" fill="#d3d6d6" stroke="none" /><path d="M3 56.500h26" />
        <path d="M11 83c-2-3-4-6-6-8 0-2 3-1 5 2l-2-9c0-2 2-2 3 0l2 6V63c1-2 3-1 3 1v9l2-9c1-2 3-1 2 1l-1 9 4-6c2-1 3 0 2 2l-4 8-2 5z" />
        <path d="M4.500 89.500h16v15h-16z" /><circle cx="20" cy="105" r="5" fill="#f4f4f4" /><path d="M24 109l4 4" strokeWidth="3" />
        <path d="M13 120h6l-3 3z" fill="#d3d6d6" stroke="none" />
        <path d="M16 128l-4 5h2v15h4v-15h2zM8 137c-5 2-4 5 2 6M24 137c6 2 5 6-4 7h-9M11 140l-4 4 4 3" />
        <path d="M13 158h6l-3 3z" fill="#d3d6d6" stroke="none" /><path d="M3 164.500h26" />
        <path d="M4.500 169.500h5v5h-5zM12.500 169.500h5v5h-5zM20.500 169.500h5v5h-5zM4.500 178.500h15v13h-15z" /><path d="M9 181l7 4-7 4z" fill="#d3d6d6" />
        <circle cx="26" cy="206" r="3.500" fill="#e2e2e2" /><path d="M24 205.500h4M24 207.500h4" stroke="#fff" />
      </g>
    </Ico>
  </NavBar>
);

const selectOnMount = (el) => el && el.select();

const DrawingArea = () => (
  <Canvas>
    <Plan />
    <ViewportLabel>[−][Top][2D Wireframe]</ViewportLabel>
    <ViewportTools>
      <ViewportButtons>
        <PlainButton aria-label="Minimize viewport"><Ico w={13} h={14}><path d="M.5 8.500h12v4H.5z" stroke="#666" fill="#eee" /></Ico></PlainButton>
        <PlainButton aria-label="Restore viewport"><Ico w={13} h={14}><path d="M3.500 3.500v-2h9v9h-2M1.500 4.500h9v8h-9zM4.500 7h3v3h-3z" stroke="#666" strokeWidth="1.300" /></Ico></PlainButton>
        <PlainButton aria-label="Close viewport"><Ico w={13} h={14}><path d="M1 2h3.500l2 2.500 2-2.500H12v2L9 7l3 3v2H8.500l-2-2.500-2 2.500H1v-2l3-3-3-3z" stroke="#555" fill="#eee" /></Ico></PlainButton>
      </ViewportButtons>
      <ViewCube />
      <WcsButton>
        WCS
        <Ico w={9} h={5}><path d="M.5.5h8l-4 4z" stroke="#b0b0b8" /></Ico>
      </WcsButton>
      <NavTools />
    </ViewportTools>

    <Prompt>
      <PromptLabel htmlFor="corner-x">Specify opposite corner:</PromptLabel>
      <PromptInput id="corner-x" $w={53} defaultValue="29.7465" ref={selectOnMount} />
      <PromptInput $w={47} $muted aria-label="Corner Y" defaultValue="6.9563" />
    </Prompt>

    <CommandLine>
      <CommandGrip>
        <Ico w={6} h={20}><path d="M1 0v20M5 0v20" strokeWidth="2" strokeDasharray="2 1" /></Ico>
        <PlainButton aria-label="Close command line"><Ico w={10} h={10}><path d="M1 1l8 8M9 1L1 9" strokeWidth="2" /></Ico></PlainButton>
        <ToolButton aria-label="Command settings"><Ico w={14} h={16}><path d="M1.500 14.500l7-8" strokeWidth="3" /><path d="M7 7c-1-4 2-7 5-6L9.500 4l1 1.500h1.500l2-2.500c1 4-3 7-5.500 6z" {...fillL} /></Ico></ToolButton>
      </CommandGrip>
      <CommandInput>
        <Ico w={15} h={16}>
          <path d="M0 4.500h7M3.500 1v7M0 10.500h7" stroke="#ddd" /><circle cx="11" cy="11" r="3" stroke="#e4e4e4" /><path d="M13 13l3 3" stroke="#f0d8b8" />
        </Ico>
        <Caret w={8} c="#555" />
        <CommandName htmlFor="command">ZOOM</CommandName>
        <CommandText id="command" defaultValue="Specify first corner: Specify opposite corner:" />
        <Ico w={7} h={4}><path d="M0 4h7L3.500 0z" fill="#555" stroke="none" /></Ico>
      </CommandInput>
    </CommandLine>
  </Canvas>
);

const Status = () => (
  <StatusBar>
    <LayoutTabs>
      <ToolButton $w={34} aria-label="Layout menu"><Burger /></ToolButton>
      <Tab $active $pad={17}>Model</Tab>
      <Tab $pad={9}>Layout1</Tab>
      <Slash />
      <Tab $pad={9}>Layout2</Tab>
      <Slash />
      <ToolButton $w={36} aria-label="New layout"><Plus /></ToolButton>
      <Slash />
    </LayoutTabs>
    <StatusTools>
      <StatusGroup><StatusButton $w={47} $large>MODEL</StatusButton></StatusGroup>
      <StatusGroup>
        <StatusButton $w={22} aria-label="Grid"><Ico><path d="M4.500 1v15M8.500 1v15M12.500 1v15M1 4.500h15M1 8.500h15M1 12.500h15" /></Ico></StatusButton>
        <StatusButton $w={26} aria-label="Snap">
          <Ico>{[3, 8, 13].map((x) => [3, 8, 13].map((y) => <Dot key={`${x}${y}`} x={x} y={y} s={2} c={LIGHT} />))}</Ico>
        </StatusButton>
        <StatusButton $w={16} aria-label="Snap settings"><Caret w={8} /></StatusButton>
      </StatusGroup>
      <StatusGroup>
        <StatusButton aria-label="Ortho"><Ico><path d="M.5 0v15.500H16M.5 10.500h5v5" /></Ico></StatusButton>
        <StatusButton $w={25} aria-label="Polar"><Ico><path d="M11 4a6 6 0 1 0 1.500 5M7 9.500h9M7 9.500l5-7" strokeWidth="1.200" /><path d="M10 3l4-2-1 5z" {...fillL} /></Ico></StatusButton>
        <StatusButton $w={15} aria-label="Polar settings"><Caret w={8} /></StatusButton>
        <StatusButton aria-label="Isodraft"><Ico><path d="M8 0v16" stroke="#5cd68a" /><path d="M2 1l12 14" stroke="#ff6b6b" /><Dot x={8} y={8} c={LIGHT} /></Ico></StatusButton>
        <StatusButton $w={15} aria-label="Isodraft settings"><Caret w={8} /></StatusButton>
      </StatusGroup>
      <StatusGroup>
        <StatusButton aria-label="Object tracking"><Ico><path d="M12 2L1 14.500h15" /><Dot x={7} y={8} c={LIGHT} /></Ico></StatusButton>
        <StatusButton $w={22} $on aria-label="Object snap"><Ico><path d="M7 3.500h8.500v12H2.500V8" stroke="#fff" /><path d="M.5.5h5v5h-5z" stroke="#fff" /></Ico></StatusButton>
        <StatusButton $w={18} aria-label="Snap list"><Caret w={8} /></StatusButton>
      </StatusGroup>
      <StatusGroup>
        <StatusButton $on aria-label="Annotation visibility"><Annot c="#fff"><circle cx="13" cy="4" r="2.500" stroke="#fff" /></Annot></StatusButton>
        <StatusButton aria-label="Auto scale"><Annot><path d="M13 0l-2 4h3l-2 4" strokeWidth="1.500" /></Annot></StatusButton>
        <StatusButton aria-label="Annotation scale"><Annot /></StatusButton>
        <StatusButton $w={34}>1:1<Caret w={8} /></StatusButton>
      </StatusGroup>
      <StatusGroup>
        <StatusButton aria-label="Workspace"><GearIcon /></StatusButton>
        <StatusButton $w={16} aria-label="Workspace list"><Caret w={8} /></StatusButton>
      </StatusGroup>
      <StatusGroup><StatusButton aria-label="Annotation monitor"><Ico><path d="M8 0v16M0 8h16" strokeWidth="2" /></Ico></StatusButton></StatusGroup>
      <StatusGroup><StatusButton aria-label="Isolate objects"><Ico><path d="M.5.5h6v6h-6zM3.500 15.500l3-5 3 5z" /><circle cx="12.500" cy="7" r="3" /></Ico></StatusButton></StatusGroup>
      <StatusGroup>
        <StatusButton $w={28} aria-label="Graphics performance">
          <Ico>
            <path d="M0 0h9l4 4v6H0z" fill="#2d6fb8" stroke="none" /><path d="M0 10h6l3 6H0z" fill="#f5b52c" stroke="none" />
            <path d="M5.500 1v10M0 6.500h12" stroke="#fff" /><Dot x={5.5} y={6.5} c="#fff" /><path d="M9 13l2.500 2.500L16 10" stroke="#5cd68a" strokeWidth="2" />
          </Ico>
        </StatusButton>
      </StatusGroup>
      <StatusGroup><StatusButton aria-label="Clean screen"><Ico><path d="M.5 2.500h15v12H.5zM3 12l3.500-3M9.500 8L13 5M10 5h3v3M3 9v3h3" /></Ico></StatusButton></StatusGroup>
      <StatusGroup><StatusButton aria-label="Customization"><Ico w={16} h={14}><path d="M0 1h16M0 7h16M0 13h16" strokeWidth="2" /></Ico></StatusButton></StatusGroup>
    </StatusTools>
  </StatusBar>
);

const AutoCad = () => (
  <>
    <GlobalStyle />
    <App>
      <Header />
      <RibbonTabs>
        {TABS.map((tab, i) => (
          <RibbonTab key={tab} $active={i === 0}>{tab}</RibbonTab>
        ))}
        <MinimizeRibbon aria-label="Minimize ribbon">
          <Ico w={15} h={8}><path d="M0 0h15v8H0z" fill="#f2f2f2" stroke="none" /><path d="M5 6h5L7.500 3z" fill="#444" stroke="none" /></Ico>
          <Caret />
        </MinimizeRibbon>
      </RibbonTabs>
      <RibbonPanels />
      <FileTabs>
        <ToolButton $w={24} aria-label="File menu"><Burger /></ToolButton>
        <SlashBox><Slash /></SlashBox>
        <Tab $pad={2} $end={8}>Start</Tab>
        <Tab $active $pad={17} $end={11}>
          Square Flange
          <Ico w={8} h={8}><path d="M0 0l8 8M8 0L0 8" strokeWidth="1.500" stroke="#aab0b8" /></Ico>
        </Tab>
        <ToolButton $w={34} aria-label="New drawing"><Plus /></ToolButton>
        <Slash />
      </FileTabs>
      <DrawingArea />
      <Status />
    </App>
  </>
);

export default AutoCad;
